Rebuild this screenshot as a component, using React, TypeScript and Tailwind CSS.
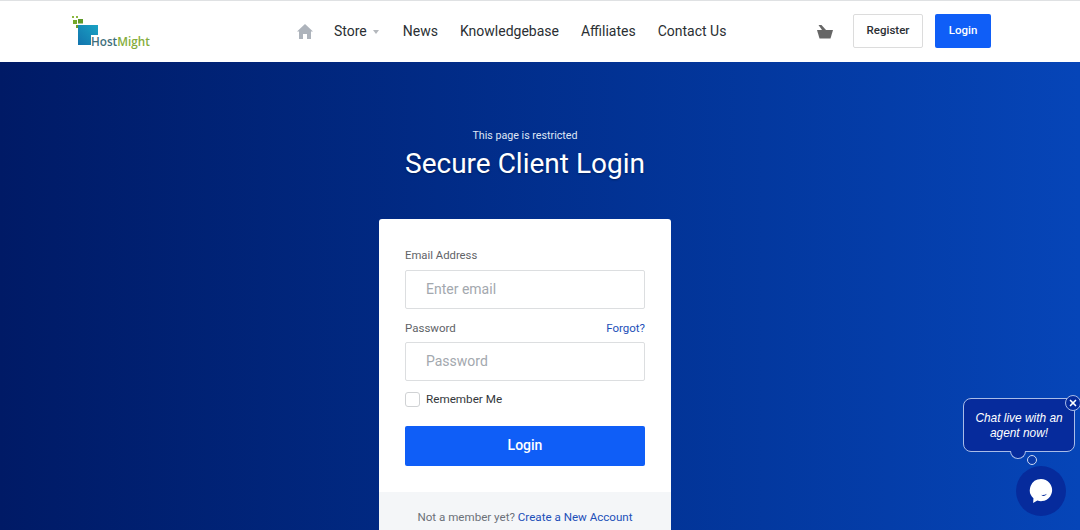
import React from 'react';
import { X } from 'lucide-react';

const navLinks = ['News', 'Knowledgebase', 'Affiliates', 'Contact Us'];

function Logo() {
  return (
    <div className="relative h-[34px] w-[80px]">
      <svg className="absolute left-0 top-0" width="32" height="32" viewBox="0 0 32 32">
        <defs>
          <linearGradient id="logoBlue" x1="0" y1="1" x2="1" y2="0">
            <stop offset="0" stopColor="#1273ad" />
            <stop offset="1" stopColor="#1aa3c4" />
          </linearGradient>
        </defs>
        <rect x="0" y="1" width="2" height="2" fill="#8cb840" />
        <rect x="4" y="1" width="2" height="2" fill="#8cb840" />
        <rect x="1" y="5" width="4" height="4" fill="#74a82c" />
        <rect x="6" y="4" width="5" height="4.5" fill="#5f9a28" />
        <rect x="4" y="10" width="2.5" height="3" fill="#6b9f2a" />
        <rect x="6" y="10" width="20" height="20" fill="url(#logoBlue)" />
        <rect x="19" y="20" width="7" height="10" fill="#fff" />
      </svg>
      <span className="absolute left-[19px] top-[18px] text-[11.7px] leading-[16px] font-['Open_Sans',sans-serif]">
        <span className="font-semibold text-[#3f6f7c]">Host</span>
        <span className="font-semibold text-[#85ad3c]">Might</span>
      </span>
    </div>
  );
}

function Header() {
  return (
    <header className="flex h-[62px] items-center border-t border-[#dfe1e3] bg-white pl-[72px] pr-[89px]">
      <Logo />
      <nav className="ml-[145px] flex items-center text-[14px] text-[#2b2f33]">
        <svg width="16" height="15" viewBox="0 0 16 15" fill="#adb3bb" className="mr-[21px]">
          <path d="M8 0 L16 7.5 L14 7.5 L14 15 L10 15 L10 10 L6 10 L6 15 L2 15 L2 7.5 L0 7.5 Z" />
        </svg>
        <span>Store</span>
        <span className="ml-[6px] mr-[24px] h-0 w-0 border-x-[3.5px] border-t-[4px] border-x-transparent border-t-[#b4b8bd]" />
        <div className="flex gap-[22px]">
          {navLinks.map((link) => (
            <a key={link}>{link}</a>
          ))}
        </div>
      </nav>
      <div className="ml-auto flex items-center">
        <svg width="16" height="14" viewBox="0 0 16 14" fill="#666" className="mr-[20px]">
          <path d="M0 5 H16 L13.5 13.5 H2.5 Z" />
          <path d="M1.5 0 L4.5 0 L9 5 H5 Z" />
        </svg>
        <a className="mb-[2px] flex h-[34px] w-[70px] items-center justify-center rounded-[2px] border border-[#dcdcdc] bg-white text-[11.5px] font-medium text-[#2b2f33]">
          Register
        </a>
        <a className="mb-[2px] ml-[12px] flex h-[34px] w-[56px] items-center justify-center rounded-[2px] bg-[#0f5ef7] text-[11.5px] font-medium text-white">
          Login
        </a>
      </div>
    </header>
  );
}

function LoginCard() {
  return (
    <div className="w-[292px] rounded-t-[3px] bg-white">
      <div className="px-[26px] pt-[30px]">
        <div className="text-[11.3px] leading-[14px] text-[#5f6368]">Email Address</div>
        <div className="mt-[7px] flex h-[39px] items-center rounded-[2px] border border-[#dcdee0] pl-[20px] text-[14px] text-[#a3a8ae]">
          Enter email
        </div>
        <div className="mt-[12px] flex items-center justify-between text-[11.5px] leading-[14px]">
          <span className="text-[#5f6368]">Password</span>
          <a className="text-[#1c4fb8]">Forgot?</a>
        </div>
        <div className="mt-[7px] flex h-[39px] items-center rounded-[2px] border border-[#dcdee0] pl-[20px] text-[14px] text-[#a3a8ae]">
          Password
        </div>
        <div className="mt-[10px] flex items-center">
          <span className="h-[15px] w-[15px] rounded-[3px] border border-[#d0d2d4]" />
          <span className="ml-[6px] text-[11.7px] text-[#33373b]">Remember Me</span>
        </div>
        <button className="mt-[17px] flex h-[40px] w-full items-center justify-center rounded-[2px] bg-[#0f5ef7] text-[14px] font-medium text-white">
          Login
        </button>
      </div>
      <div className="mt-[26px] flex h-[60px] justify-center bg-[#f4f6f8] pt-[17px] text-[11.6px] leading-[16px] text-[#6c7178]">
        <span>
          Not a member yet? <a className="text-[#1c4fb8]">Create a New Account</a>
        </span>
      </div>
    </div>
  );
}

function ChatWidget() {
  return (
    <>
      <div className="absolute left-[963px] top-[398px] flex h-[54px] w-[112px] items-center justify-center rounded-[8px] border border-[#a9bce8] bg-[#062b9c] px-[8px] pt-[2px] text-center text-[11.9px] leading-[15px] text-white italic font-['Liberation_Sans',sans-serif]">
        Chat live with an agent now!
      </div>
      <div className="absolute left-[1010px] top-[451px] h-[8px] w-[16px] rounded-b-full border border-t-0 border-[#a9bce8] bg-[#062b9c]" />
      <div className="absolute left-[1027px] top-[455px] h-[10px] w-[10px] rounded-full border border-[#cdd8f2] bg-[#0a3aa8]" />
      <div className="absolute left-[1065px] top-[395px] flex h-[16px] w-[16px] items-center justify-center rounded-full border border-[#a9bce8] bg-[#062b9c]">
        <X size={10} strokeWidth={4} color="#fff" />
      </div>
      <div className="absolute left-[1016px] top-[466px] flex h-[50px] w-[50px] items-center justify-center rounded-full bg-[#062b9c]">
        <svg width="24" height="26" viewBox="0 0 26 28">
          <path d="M13 1 A12 12 0 1 1 9 24.3 L4.5 27 L4.8 21.8 A12 12 0 0 1 13 1 Z" fill="#fff" />
          <path d="M13 18 Q16 19 19.5 17 Q17 21 13 18 Z" fill="#062b9c" />
        </svg>
      </div>
    </>
  );
}

export default function App() {
  return (
    <div className="relative h-[530px] w-[1080px] overflow-hidden font-['Roboto',sans-serif]">
      <Header />
      <main className="flex h-[468px] flex-col items-center overflow-hidden bg-gradient-to-r from-[#001a66] to-[#0645b8] pr-[30px]">
        <p className="mt-[67px] text-[10.7px] leading-[14px] text-[#dfe6f5]">This page is restricted</p>
        <h1 className="mt-[4px] whitespace-nowrap text-[28px] leading-[34px] text-white [text-shadow:0_1px_2px_rgba(0,0,0,0.35)]">
          Secure Client Login
        </h1>
        <div className="mt-[38px]">
          <LoginCard />
        </div>
      </main>
      <ChatWidget />
    </div>
  );
}
